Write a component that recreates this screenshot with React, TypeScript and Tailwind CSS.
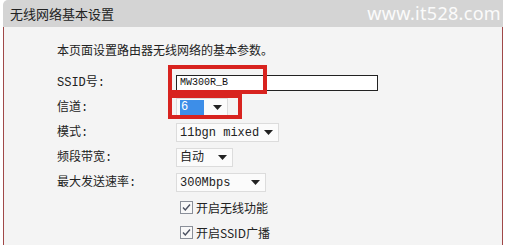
import React from "react";

const mono = { fontFamily: "'Liberation Mono', 'Noto Sans CJK SC', monospace" };
const cjk = { fontFamily: "'Noto Sans CJK SC', 'Liberation Sans', sans-serif" };

function Arrow() {
  return (
    <svg width="9" height="5" viewBox="0 0 9 5" className="shrink-0">
      <path d="M0 0h9L4.5 5z" fill="#222" />
    </svg>
  );
}

function Select({ value, width, highlight }: { value: string; width: string; highlight?: boolean }) {
  return (
    <div
      className={`flex items-center justify-between h-[19px] pl-[3px] pr-[5px] bg-[#fbfbfb] border border-[#dcdcdc] ${width}`}
    >
      {highlight ? (
        <span className="bg-[#3d8ee8] text-white text-[12px] leading-[15px] w-[24px] pl-[1px]" style={mono}>
          {value}
        </span>
      ) : (
        <span className="text-[12px] text-[#222]" style={mono}>
          {value}
        </span>
      )}
      <Arrow />
    </div>
  );
}

function Check({ label }: { label: string }) {
  return (
    <div className="flex items-center gap-[3px]">
      <div className="w-[13px] h-[13px] border border-[#8a8f99] bg-[#f8f8f8] flex items-center justify-center">
        <svg width="9" height="9" viewBox="0 0 9 9">
          <path d="M1 4.5l2.3 2.5L8 1.5" stroke="#4a5060" strokeWidth="1.4" fill="none" />
        </svg>
      </div>
      <span className="text-[12px] text-[#222]" style={cjk}>
        {label}
      </span>
    </div>
  );
}

const rows: { label: string; control: React.ReactNode }[] = [
  {
    label: "SSID号:",
    control: (
      <div className="relative">
        <div className="w-[202px] h-[16px] bg-white border border-[#222] flex items-center pl-[3px] text-[10px] text-[#111]" style={mono}>
          MW300R_B
        </div>
        <div className="absolute left-[-8px] top-[-10px] w-[99px] h-[29px] border-[4px] border-[#d8231f]" />
      </div>
    ),
  },
  {
    label: "信道:",
    control: (
      <div className="relative">
        <Select value="6" width="w-[52px]" highlight />
        <div className="absolute left-[-8px] top-[-4px] w-[74px] h-[25px] border-[4px] border-[#d8231f]" />
      </div>
    ),
  },
  { label: "模式:", control: <Select value="11bgn mixed" width="w-[103px]" /> },
  { label: "频段带宽:", control: <Select value="自动" width="w-[57px]" /> },
  { label: "最大发送速率:", control: <Select value="300Mbps" width="w-[90px]" /> },
];

export default function App() {
  return (
    <div className="w-[506px] h-[245px] bg-white overflow-hidden pl-[3px] pr-[3px] flex flex-col">
      <div className="h-[27px] shrink-0 bg-[#d4d4d4] rounded-tl-[5px] flex items-center justify-between pl-[7px] pr-[2px]">
        <span className="text-[13px] text-[#222]" style={cjk}>
          无线网络基本设置
        </span>
        <span className="text-[18px] text-white/90 tracking-[0.3px]" style={{ fontFamily: "'Noto Sans', sans-serif" }}>
          www.it528.com
        </span>
      </div>
      <div className="flex-1 bg-[#f4f4f4] border-l border-r border-[#a04848] flex flex-col pl-[53px]">
        <div className="h-[43px] flex items-center pt-[2px] text-[12px] text-[#222]" style={cjk}>
          本页面设置路由器无线网络的基本参数。
        </div>
        {rows.map((r) => (
          <div key={r.label} className="h-[25px] flex items-center">
            <span className="w-[119px] text-[12px] text-[#222]" style={mono}>
              {r.label}
            </span>
            {r.control}
          </div>
        ))}
        <div className="h-[25px] flex items-center pl-[123px]">
          <Check label="开启无线功能" />
        </div>
        <div className="h-[25px] flex items-center pl-[123px]">
          <Check label="开启SSID广播" />
        </div>
      </div>
    </div>
  );
}
